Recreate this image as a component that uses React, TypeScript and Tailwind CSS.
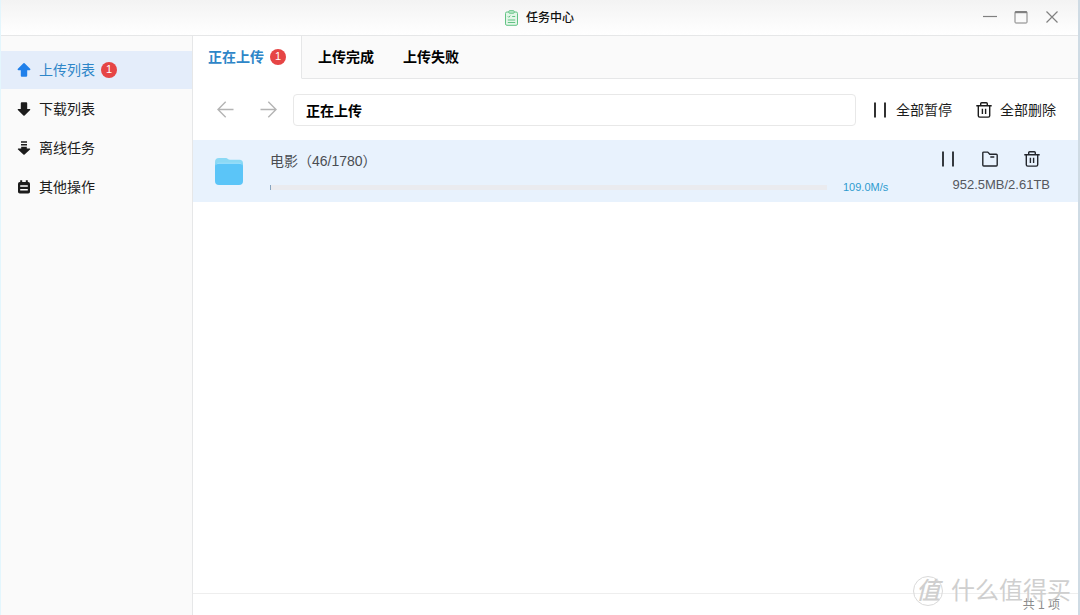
import React, { useState } from 'react';
import clsx from 'clsx';

type IconProps = { className?: string };

function ClipboardIcon() {
  return (
    <svg width="13" height="16" viewBox="0 0 13 16" fill="none" stroke="#62c384" strokeWidth="1">
      <rect x="0.500" y="2" width="12" height="13.300" rx="1.400" fill="#e3f6e8" />
      <rect x="3.800" y="0.700" width="5.400" height="2.500" rx="0.800" fill="#c3ebcf" />
      <path d="M2.800 6.300l1 1 1.500-1.700M7.200 6.500h3M2.800 10h7.400M2.800 12.500h7.400" />
    </svg>
  );
}

function ArrowUpIcon() {
  return (
    <svg width="14" height="14" viewBox="0 0 14 14" fill="#2080ea">
      <path d="M6.400.3a.9.9 0 0 1 1.200 0l5.500 5.500c.6.6.2 1.400-.6 1.400h-2.300v5.600c0 .5-.4.900-.9.900H4.700a.9.9 0 0 1-.9-.9V7.200H1.500c-.8 0-1.200-.8-.6-1.400z" />
    </svg>
  );
}

function ArrowDownIcon() {
  return (
    <svg width="14" height="14" viewBox="0 0 14 14" fill="currentColor">
      <path d="M4.700.3h4.600c.5 0 .9.400.9.900v5.700h2.300c.8 0 1.100.7.6 1.200l-5.500 5.300a.9.9 0 0 1-1.200 0L.9 8.100c-.5-.5-.2-1.200.6-1.200h2.300V1.200c0-.5.400-.9.900-.9z" />
    </svg>
  );
}

function OfflineIcon() {
  return (
    <svg width="14" height="14" viewBox="0 0 14 14" fill="currentColor">
      <path d="M4 .3h6v1.500H4zM4 3h6v1.500H4zM4.200 5.700h5.600v1.700h2.700c.7 0 .9.700.5 1.100l-5.400 4.900a.9.9 0 0 1-1.200 0L1 8.500c-.4-.4-.2-1.100.5-1.100h2.700z" />
    </svg>
  );
}

function OtherIcon() {
  return (
    <svg width="14" height="14" viewBox="0 0 14 14">
      <rect x="1" y="2" width="12" height="11.500" rx="1.800" fill="currentColor" />
      <path d="M4.200.3v3.300M9.800.3v3.300" stroke="currentColor" strokeWidth="2" />
      <path d="M3.200 6h7.600M3.200 9.800h7.600" stroke="#fff" strokeWidth="1.500" />
    </svg>
  );
}

function PauseIcon() {
  return (
    <svg width="16" height="16" viewBox="0 0 16 16" stroke="currentColor" strokeWidth="1.800">
      <path d="M3 .5v15M13 .5v15" />
    </svg>
  );
}

function TrashIcon() {
  return (
    <svg width="16" height="16" viewBox="0 0 16 16" fill="none" stroke="currentColor" strokeWidth="1.400">
      <path d="M.3 3.700h15.400M4.700 3.500V1.800c0-.6.4-1 1-1h4.600c.6 0 1 .4 1 1v1.700M2.300 3.700v10c0 .8.6 1.400 1.400 1.400h8.600c.8 0 1.400-.6 1.400-1.400v-10M6.400 6.800v5.200M9.600 6.800v5.200" />
    </svg>
  );
}

function FolderOutlineIcon() {
  return (
    <svg width="16" height="16" viewBox="0 0 16 16" fill="none" stroke="currentColor" strokeWidth="1.400" strokeLinejoin="round">
      <path d="M.8 2c0-.5.400-.9.900-.9h4.100l2 2.200h6.500c.5 0 .9.400.9.900v9.900c0 .5-.4.900-.9.900H1.700a.9.9 0 0 1-.9-.9zM8.300 6h4" />
    </svg>
  );
}

function FolderIcon() {
  return (
    <svg width="28" height="28" viewBox="0 0 28 28">
      <path d="M0 5a4 4 0 0 1 4-4h7c1.500 0 2.200 1.800 4 1.800h9.500A3.500 3.500 0 0 1 28 6.300V12H0z" fill="#8bd9f5" />
      <rect y="6" width="28" height="22" rx="4" fill="#5bc5f8" />
      <path d="M1.500 7.200Q2.500 6.300 4 6.300h20q1.500 0 2.500.9" fill="none" stroke="#b5e9fb" strokeWidth="0.800" />
    </svg>
  );
}

function HistoryArrow({ className }: IconProps) {
  return (
    <svg className={className} width="17" height="17" viewBox="0 0 17 17" fill="none" stroke="currentColor" strokeWidth="1.400">
      <path d="M16.500 8.500H1.200M8.700.8L1 8.500l7.700 7.700" />
    </svg>
  );
}

function Badge({ count }: { count: number }) {
  return (
    <span className="flex size-4 items-center justify-center rounded-full bg-[#e64545] text-[11px] font-normal text-white">
      {count}
    </span>
  );
}

const navItems = [
  { id: 'upload', label: '上传列表', icon: <ArrowUpIcon />, count: 1 },
  { id: 'download', label: '下载列表', icon: <ArrowDownIcon />, count: 0 },
  { id: 'offline', label: '离线任务', icon: <OfflineIcon />, count: 0 },
  { id: 'other', label: '其他操作', icon: <OtherIcon />, count: 0 },
];

const tabs = [
  { id: 'uploading', label: '正在上传', count: 1 },
  { id: 'done', label: '上传完成', count: 0 },
  { id: 'failed', label: '上传失败', count: 0 },
];

function TitleBar() {
  return (
    <header className="grid h-9 shrink-0 grid-cols-[1fr_auto_1fr] items-center border-b border-[#e6e7e8] bg-linear-to-b from-[#f3f3f3] to-white">
      <span />
      <div className="flex items-center gap-2">
        <ClipboardIcon />
        <h1 className="text-xs font-medium text-[#111]">任务中心</h1>
      </div>
      <div className="flex items-center justify-end gap-[17px] pr-[19px] text-[#808080]">
        <button aria-label="最小化">
          <svg width="14" height="14" viewBox="0 0 14 14" stroke="currentColor" strokeWidth="1.200">
            <path d="M0 5.500h14" />
          </svg>
        </button>
        <button aria-label="最大化">
          <svg width="14" height="14" viewBox="0 0 14 14" fill="none" stroke="currentColor">
            <rect x="1" y="0.500" width="12" height="11.500" rx="0.800" />
            <path d="M1 1.300h12" strokeWidth="1.800" />
          </svg>
        </button>
        <button aria-label="关闭">
          <svg width="14" height="14" viewBox="0 0 14 14" stroke="currentColor" strokeWidth="1.200">
            <path d="M1.500.5l11 11M12.500.5l-11 11" />
          </svg>
        </button>
      </div>
    </header>
  );
}

function Sidebar() {
  const [active, setActive] = useState('upload');

  return (
    <nav className="flex w-48 shrink-0 flex-col gap-px border-r border-[#e6e7e8] bg-[#fafafa] pt-[15px]">
      {navItems.map(item => (
        <button
          key={item.id}
          onClick={() => setActive(item.id)}
          className={clsx(
            'flex h-[38px] items-center gap-2 pl-4 text-sm',
            active === item.id ? 'bg-[#e4edfa] text-[#2e86c8]' : 'text-[#1c1c1c]',
          )}
        >
          {item.icon}
          <span className="flex items-center gap-1.5">
            {item.label}
            {item.count > 0 && <Badge count={item.count} />}
          </span>
        </button>
      ))}
    </nav>
  );
}

function TabBar() {
  const [active, setActive] = useState('uploading');

  return (
    <div role="tablist" className="flex h-[43px] shrink-0 bg-[#fafafa]">
      {tabs.map(tab => (
        <button
          key={tab.id}
          role="tab"
          aria-selected={active === tab.id}
          onClick={() => setActive(tab.id)}
          className={clsx(
            'flex items-center gap-1.5 border-b text-sm font-bold',
            active === tab.id
              ? 'border-r border-b-white border-r-[#e6e7e8] bg-white px-[15px] text-[#2e86c8]'
              : 'border-[#e6e7e8] pl-4 pr-[13px] text-black',
          )}
        >
          <span>{tab.label}</span>
          {tab.count > 0 && <Badge count={tab.count} />}
        </button>
      ))}
      <div className="flex-1 border-b border-[#e6e7e8]" />
    </div>
  );
}

function Toolbar() {
  return (
    <div className="flex h-[61px] shrink-0 items-center pl-6 pr-[22px] text-sm text-[#1c1c1c]">
      <button aria-label="后退" className="text-[#b4b4b4]">
        <HistoryArrow />
      </button>
      <button aria-label="前进" className="ml-[26px] text-[#b4b4b4]">
        <HistoryArrow className="rotate-180" />
      </button>
      <input
        aria-label="当前位置"
        defaultValue="正在上传"
        className="ml-4 h-8 min-w-0 flex-1 rounded-sm border border-[#e8e8e8] bg-white px-3 font-bold text-black outline-none"
      />
      <button className="ml-4 flex items-center gap-2">
        <PauseIcon />
        全部暂停
      </button>
      <button className="ml-6 flex items-center gap-2">
        <TrashIcon />
        全部删除
      </button>
    </div>
  );
}

function TaskRow() {
  const percent = 0.2;

  return (
    <li className="flex h-[62px] items-center bg-[#e8f2fd] pl-[22px] pr-7">
      <FolderIcon />
      <div className="ml-[27px] flex min-w-0 flex-1 flex-col pt-2">
        <span className="text-sm text-[#4a4d52]">电影（46/1780）</span>
        <div className="mt-1 flex h-6 items-center">
          <div
            role="progressbar"
            aria-label="上传进度"
            aria-valuenow={percent}
            className="h-[5px] flex-1 bg-[#eaebef]"
          >
            <div className="h-full bg-[#86a4c0]" style={{ width: `${percent}%` }} />
          </div>
          <span className="w-[113px] pl-4 text-[11px] text-[#2e9bcf]">109.0M/s</span>
        </div>
      </div>
      <div className="flex flex-col items-end pt-1">
        <div className="flex gap-[26px] pr-[10px] text-[#22262c]">
          <button aria-label="暂停">
            <PauseIcon />
          </button>
          <button aria-label="打开文件夹">
            <FolderOutlineIcon />
          </button>
          <button aria-label="删除">
            <TrashIcon />
          </button>
        </div>
        <span className="mt-2 text-[13px] leading-5 text-[#55585e]">952.5MB/2.61TB</span>
      </div>
    </li>
  );
}

function Watermark() {
  return (
    <div className="pointer-events-none absolute bottom-2 right-[7px] flex items-center gap-2 text-[#cfcfcf]">
      <span className="flex size-[30px] items-center justify-center rounded-full border border-[#dadada] text-2xl font-medium italic leading-none">
        值
      </span>
      <span className="text-2xl leading-8">什么值得买</span>
    </div>
  );
}

export default function App() {
  return (
    <div className="relative flex h-screen flex-col border-l border-r-2 border-l-[#e3f6fd] border-r-[#cfdbe4] bg-white font-['Liberation_Sans','Noto_Sans_CJK_SC',sans-serif]">
      <TitleBar />
      <div className="flex min-h-0 flex-1">
        <Sidebar />
        <main className="flex min-w-0 flex-1 flex-col">
          <TabBar />
          <Toolbar />
          <ul className="flex-1">
            <TaskRow />
          </ul>
          <footer className="flex h-[22px] shrink-0 items-center justify-end border-t border-[#eeeeee] pr-[18px] text-xs text-[#8a8a8a]">
            共 1 项
          </footer>
        </main>
      </div>
      <Watermark />
    </div>
  );
}
